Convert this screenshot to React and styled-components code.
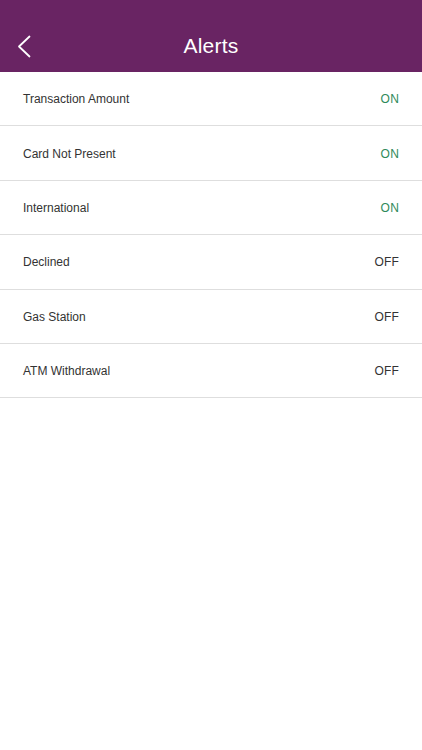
import React from "react";
import styled, { createGlobalStyle } from "styled-components";

const Global = createGlobalStyle`
  html, body { margin: 0; padding: 0; background: #ffffff; }
  body { font-family: "Liberation Sans", Arial, sans-serif; -webkit-font-smoothing: antialiased; }
`;

const Page = styled.div`
  width: 422px;
  min-height: 750px;
  background: #ffffff;
`;

const Header = styled.header`
  height: 72px;
  background: #692463;
  display: grid;
  grid-template-columns: 60px 1fr 60px;
  align-items: center;
  padding-top: 20px;
  box-sizing: border-box;
`;

const BackButton = styled.button`
  background: none;
  border: none;
  padding: 0 0 0 17px;
  display: flex;
  align-items: center;
  height: 100%;
  cursor: pointer;
`;

const Title = styled.h1`
  margin: 0;
  text-align: center;
  color: #ffffff;
  font-size: 21px;
  font-weight: 400;
  letter-spacing: 0.2px;
`;

const List = styled.ul`
  list-style: none;
  margin: 0;
  padding: 0;
`;

const Row = styled.li`
  height: 54.4px;
  box-sizing: border-box;
  display: flex;
  align-items: center;
  justify-content: space-between;
  padding: 1px 23px 0;
  border-bottom: 1px solid #dedede;
`;

const Label = styled.span`
  font-size: 12px;
  color: #333333;
`;

const Status = styled.span`
  font-size: 12px;
  color: ${(p) => (p.$on ? "#2f8a5a" : "#333333")};
  letter-spacing: 0.2px;
`;

const alerts = [
  { label: "Transaction Amount", on: true },
  { label: "Card Not Present", on: true },
  { label: "International", on: true },
  { label: "Declined", on: false },
  { label: "Gas Station", on: false },
  { label: "ATM Withdrawal", on: false },
];

export default function App() {
  return (
    <Page>
      <Global />
      <Header>
        <BackButton aria-label="Back">
          <svg width="14" height="23" viewBox="0 0 14 23" fill="none">
            <path d="M12.5 1.5 L2 11.5 L12.5 21.5" stroke="#ffffff" strokeWidth="1.8" strokeLinecap="round" strokeLinejoin="round" />
          </svg>
        </BackButton>
        <Title>Alerts</Title>
        <div />
      </Header>
      <List>
        {alerts.map((a) => (
          <Row key={a.label}>
            <Label>{a.label}</Label>
            <Status $on={a.on}>{a.on ? "ON" : "OFF"}</Status>
          </Row>
        ))}
      </List>
    </Page>
  );
}
